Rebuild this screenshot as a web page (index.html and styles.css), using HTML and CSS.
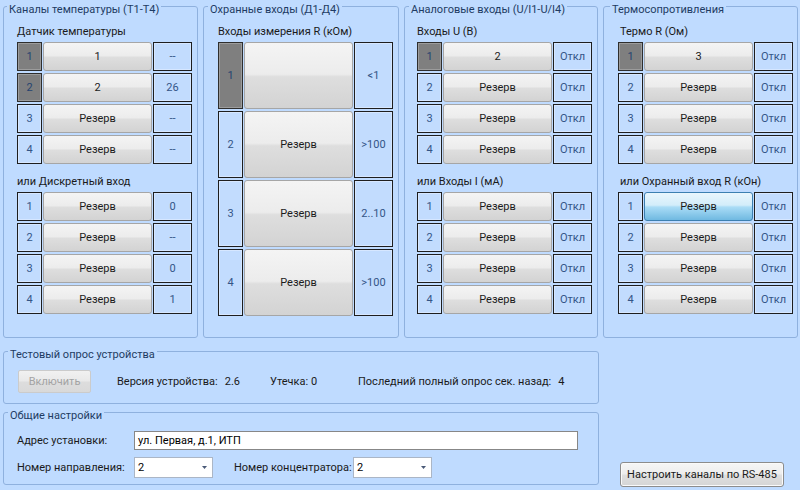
FILE: index.html
```html
<!DOCTYPE html>
<html lang="ru">
<head>
<meta charset="utf-8">
<title>Настройки устройства</title>
<link rel="stylesheet" href="styles.css">
</head>
<body>
<div class="top">
  <div class="group g1">
    <div class="legend">Каналы температуры (T1-T4)</div>
    <div class="label">Датчик температуры</div>
    <div class="rows">
      <div class="row"><div class="num on">1</div><div class="btn">1</div><div class="val">--</div></div>
      <div class="row"><div class="num on">2</div><div class="btn">2</div><div class="val">26</div></div>
      <div class="row"><div class="num">3</div><div class="btn">Резерв</div><div class="val">--</div></div>
      <div class="row"><div class="num">4</div><div class="btn">Резерв</div><div class="val">--</div></div>
    </div>
    <div class="label sub">или Дискретный вход</div>
    <div class="rows">
      <div class="row"><div class="num">1</div><div class="btn">Резерв</div><div class="val">0</div></div>
      <div class="row"><div class="num">2</div><div class="btn">Резерв</div><div class="val">--</div></div>
      <div class="row"><div class="num">3</div><div class="btn">Резерв</div><div class="val">0</div></div>
      <div class="row"><div class="num">4</div><div class="btn">Резерв</div><div class="val">1</div></div>
    </div>
  </div>

  <div class="group g2">
    <div class="legend">Охранные входы (Д1-Д4)</div>
    <div class="label">Входы измерения R (кОм)</div>
    <div class="rows">
      <div class="row tall"><div class="num on">1</div><div class="btn"></div><div class="val">&lt;1</div></div>
      <div class="row tall"><div class="num">2</div><div class="btn">Резерв</div><div class="val">&gt;100</div></div>
      <div class="row tall"><div class="num">3</div><div class="btn">Резерв</div><div class="val">2..10</div></div>
      <div class="row tall"><div class="num">4</div><div class="btn">Резерв</div><div class="val">&gt;100</div></div>
    </div>
  </div>

  <div class="group g3">
    <div class="legend">Аналоговые входы (U/I1-U/I4)</div>
    <div class="label">Входы U (В)</div>
    <div class="rows">
      <div class="row"><div class="num on">1</div><div class="btn">2</div><div class="val">Откл</div></div>
      <div class="row"><div class="num">2</div><div class="btn">Резерв</div><div class="val">Откл</div></div>
      <div class="row"><div class="num">3</div><div class="btn">Резерв</div><div class="val">Откл</div></div>
      <div class="row"><div class="num">4</div><div class="btn">Резерв</div><div class="val">Откл</div></div>
    </div>
    <div class="label sub">или Входы I (мА)</div>
    <div class="rows">
      <div class="row"><div class="num">1</div><div class="btn">Резерв</div><div class="val">Откл</div></div>
      <div class="row"><div class="num">2</div><div class="btn">Резерв</div><div class="val">Откл</div></div>
      <div class="row"><div class="num">3</div><div class="btn">Резерв</div><div class="val">Откл</div></div>
      <div class="row"><div class="num">4</div><div class="btn">Резерв</div><div class="val">Откл</div></div>
    </div>
  </div>

  <div class="group g4">
    <div class="legend">Термосопротивления</div>
    <div class="label">Термо R (Ом)</div>
    <div class="rows">
      <div class="row"><div class="num on">1</div><div class="btn">3</div><div class="val">Откл</div></div>
      <div class="row"><div class="num">2</div><div class="btn">Резерв</div><div class="val">Откл</div></div>
      <div class="row"><div class="num">3</div><div class="btn">Резерв</div><div class="val">Откл</div></div>
      <div class="row"><div class="num">4</div><div class="btn">Резерв</div><div class="val">Откл</div></div>
    </div>
    <div class="label sub">или Охранный вход R (кОн)</div>
    <div class="rows">
      <div class="row"><div class="num">1</div><div class="btn hl">Резерв</div><div class="val">Откл</div></div>
      <div class="row"><div class="num">2</div><div class="btn">Резерв</div><div class="val">Откл</div></div>
      <div class="row"><div class="num">3</div><div class="btn">Резерв</div><div class="val">Откл</div></div>
      <div class="row"><div class="num">4</div><div class="btn">Резерв</div><div class="val">Откл</div></div>
    </div>
  </div>
</div>

<div class="bottom">
  <div class="left">
    <div class="group g-test">
      <div class="legend">Тестовый опрос устройства</div>
      <div class="test-row">
        <div class="btn-dis">Включить</div>
        <div class="info info-ver"><span>Версия устройства:</span><span class="v">2.6</span></div>
        <div class="info info-leak"><span>Утечка:</span> <span>0</span></div>
        <div class="info"><span>Последний полный опрос сек. назад:</span><span class="v">4</span></div>
      </div>
    </div>
    <div class="group g-gen">
      <div class="legend">Общие настройки</div>
      <div class="form-row r1">
        <div class="flabel">Адрес установки:</div>
        <div class="input">ул. Первая, д.1, ИТП</div>
      </div>
      <div class="form-row r2">
        <div class="flabel">Номер направления:</div>
        <div class="combo"><span>2</span><svg class="arrow" width="5" height="3" viewBox="0 0 5 3"><path d="M0 0H5L2.5 3Z" fill="#4a5a78"/></svg></div>
        <div class="flabel flabel2">Номер концентратора:</div>
        <div class="combo"><span>2</span><svg class="arrow" width="5" height="3" viewBox="0 0 5 3"><path d="M0 0H5L2.5 3Z" fill="#4a5a78"/></svg></div>
      </div>
    </div>
  </div>
  <div class="rs">Настроить каналы по RS-485</div>
</div>
</body>
</html>
```

FILE: styles.css
```css
* { box-sizing: border-box; }

body {
  margin: 0;
  width: 800px;
  height: 490px;
  overflow: hidden;
  background: #bfdbff;
  font-family: Roboto, "Noto Sans", "DejaVu Sans", sans-serif;
  font-size: 11px;
  color: #1a1a1a;
}

.top {
  display: grid;
  grid-template-columns: 195px 196px 194px 195px;
  column-gap: 5px;
  padding: 6px 0 0 3px;
}

.group {
  border: 1px solid #8fb1de;
  border-radius: 3px;
}

.top .group { height: 332px; }
.g1 { padding-left: 13px; }
.g2 { padding-left: 14px; }
.g3 { padding-left: 12px; }
.g4 { padding-left: 14px; }

.legend {
  position: relative;
  width: max-content;
  margin: -4px 0 0 4px;
  padding: 0 2px;
  line-height: 14px;
  background: #bfdbff;
  color: #1e3b63;
  white-space: nowrap;
}
.g1 .legend { margin-left: 3px; left: -13px; }
.g2 .legend { left: -14px; }
.g3 .legend { left: -12px; }
.g4 .legend { margin-left: 6px; left: -14px; }

.label {
  line-height: 14px;
  margin-top: 8px;
  white-space: nowrap;
}
.label.sub { margin-top: 11px; }
.g4 .label { margin-left: 2px; }

.rows {
  display: flex;
  flex-direction: column;
  gap: 2px;
  margin-top: 3px;
}

.row {
  display: grid;
  grid-template-columns: 25px 109px 39px;
  column-gap: 1px;
  height: 29px;
}
.row.tall { height: 67px; }

.num, .val {
  display: flex;
  align-items: center;
  justify-content: center;
  border: 1px solid #1e1e1e;
  background: #c2dcfe;
  box-shadow: inset 0 0 0 1px #d6e7ff;
  color: #345587;
}
.num.on {
  background: #7f7f7f;
  border-color: #2e2e2e;
  box-shadow: inset 0 0 0 1px #9c9c9c;
  color: #26436f;
}

.btn {
  display: flex;
  align-items: center;
  justify-content: center;
  border: 1px solid #a6a6a6;
  border-radius: 3px;
  background: linear-gradient(#f4f4f4, #ececec 48%, #dedede 52%, #d3d3d3);
  color: #1c1c1c;
}
.btn.hl {
  border-color: #3c7fb1;
  background: linear-gradient(#e9f6fd, #d3edfa 45%, #aadcf6 52%, #70b9e1);
}

.bottom {
  display: flex;
  padding: 13px 0 0 3px;
}
.left { width: 596px; }

.g-test { height: 53px; }
.g-gen { height: 73px; margin-top: 8px; }

.test-row {
  display: flex;
  align-items: center;
  margin-top: 8px;
  padding-left: 14px;
}
.btn-dis {
  width: 73px;
  height: 23px;
  display: flex;
  align-items: center;
  justify-content: center;
  border: 1px solid #cbcbcb;
  border-radius: 2px;
  background: linear-gradient(#f1f1f1, #e9e9e9 48%, #dddddd 52%, #d9d9d9);
  color: #a3a3a3;
}
.info { white-space: nowrap; }
.info .v { margin-left: 7px; }
.info-ver { margin-left: 26px; width: 153px; }
.info-leak { width: 88px; }

.form-row {
  display: flex;
  align-items: center;
  padding-left: 13px;
  white-space: nowrap;
}
.r1 { margin-top: 8px; }
.r2 { margin-top: 7px; }
.flabel { width: 117px; }
.flabel2 { width: 119px; margin-left: 21px; }

.input {
  width: 444px;
  height: 19px;
  line-height: 17px;
  padding-left: 3px;
  background: #fff;
  border: 1px solid #878787;
  color: #000;
}
.combo {
  width: 79px;
  height: 21px;
  display: flex;
  align-items: center;
  padding-left: 3px;
  background: #fff;
  border: 1px solid #abb6c6;
  color: #000;
}
.combo .arrow { margin-left: auto; margin-right: 5px; }

.rs {
  width: 164px;
  height: 25px;
  margin: 111px 0 0 21px;
  display: flex;
  align-items: center;
  justify-content: center;
  border: 1px solid #8c8c8c;
  border-radius: 3px;
  background: linear-gradient(#f6f6f6, #ededed 48%, #dfdfdf 52%, #d5d5d5);
  box-shadow: inset 0 0 0 1px #fafafa;
  color: #1a1a1a;
  white-space: nowrap;
}
```
